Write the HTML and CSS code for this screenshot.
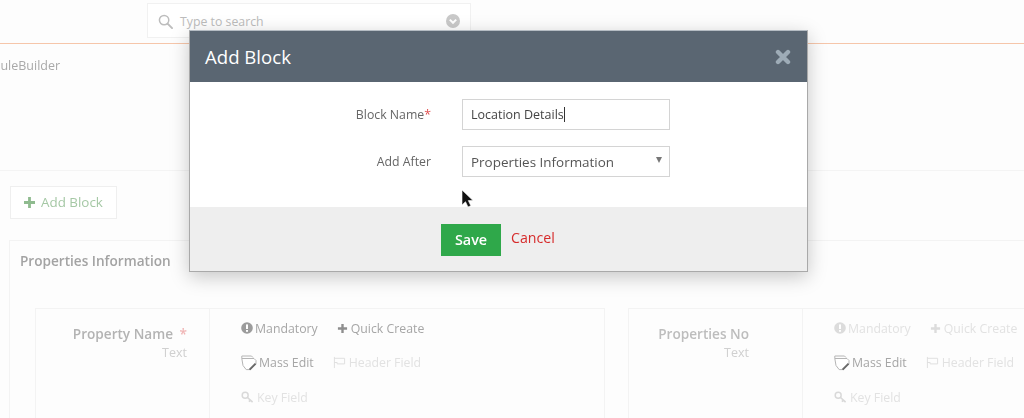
FILE: index.html
```html
<!DOCTYPE html>
<html lang="en">
<head>
<meta charset="utf-8">
<title>Add Block</title>
<link rel="stylesheet" href="styles.css">
</head>
<body>
<div class="page">
  <header class="topbar">
    <div class="search">
      <svg class="search-icon" viewBox="0 0 16 16" width="15" height="15"><circle cx="6.5" cy="6.5" r="5" fill="none" stroke="#bdbdbd" stroke-width="1.6"/><path d="M10.2 10.2 15 15" stroke="#bdbdbd" stroke-width="2" stroke-linecap="round"/></svg>
      <span class="search-text">Type to search</span>
      <svg class="search-caret" viewBox="0 0 14 14" width="14" height="14"><circle cx="7" cy="7" r="7" fill="#c9c9c9"/><path d="M3.8 5.6 7 8.8l3.2-3.2" fill="none" stroke="#fff" stroke-width="2"/></svg>
    </div>
  </header>
  <div class="crumb"><span class="crumb-text">ModuleBuilder</span></div>
  <div class="actions">
    <button class="add-block"><svg class="plus" viewBox="0 0 11 11" width="11" height="11"><path d="M5.5 0v11M0 5.5h11" stroke="#8fbb8f" stroke-width="2.8"/></svg>Add Block</button>
  </div>
  <section class="block">
    <h2 class="block-title">Properties Information</h2>
    <div class="fields">
      <article class="field">
        <div class="field-name">
          <div class="name strong">Property Name <span class="req">*</span></div>
          <div class="type">Text</div>
        </div>
        <div class="props">
          <div class="prop-row">
            <span class="prop on tight"><svg viewBox="0 0 12 12" width="12" height="12"><circle cx="6" cy="6" r="5.8" fill="#9c9c9c"/><rect x="5" y="2.4" width="2" height="4.6" fill="#fff"/><rect x="5" y="8" width="2" height="1.8" fill="#fff"/></svg>Mandatory</span>
            <span class="prop on"><svg viewBox="0 0 12 12" width="11" height="11"><path d="M6 1v10M1 6h10" stroke="#8e8e8e" stroke-width="2.6"/></svg>Quick Create</span>
          </div>
          <div class="prop-row">
            <span class="prop on tight"><svg viewBox="0 0 16 16" width="16" height="16"><path d="M.8 3.5V1h9.7l1.5 1.5" fill="none" stroke="#b5b5b5"/><path d="M.8 3.5h12.2L15 5.5v3.2L9.5 14.6H5.2L2 10.5z" fill="#fff" stroke="#b5b5b5"/><path d="M8.6 14.6l6-6" stroke="#6a6a6a" stroke-width="2"/></svg>Mass Edit</span>
            <span class="prop off"><svg viewBox="0 0 14 14" width="13" height="13"><path d="M1.5 1v12M1.5 2.5h11v6h-8V7h-3" fill="none" stroke="#dedede"/></svg>Header Field</span>
          </div>
          <div class="prop-row">
            <span class="prop off"><svg viewBox="0 0 14 14" width="13" height="13"><circle cx="4.5" cy="4.5" r="3.2" fill="none" stroke="#d9d9d9" stroke-width="1.6"/><path d="M7 7l5.5 5M10 10l-1.5 1.5" stroke="#d9d9d9" stroke-width="1.8"/></svg>Key Field</span>
          </div>
        </div>
      </article>
      <article class="field">
        <div class="field-name no-star">
          <div class="name">Properties No</div>
          <div class="type">Text</div>
        </div>
        <div class="props">
          <div class="prop-row">
            <span class="prop off tight"><svg viewBox="0 0 12 12" width="12" height="12"><circle cx="6" cy="6" r="5.8" fill="#dcdcdc"/><rect x="5" y="2.4" width="2" height="4.6" fill="#fff"/><rect x="5" y="8" width="2" height="1.8" fill="#fff"/></svg>Mandatory</span>
            <span class="prop off"><svg viewBox="0 0 12 12" width="11" height="11"><path d="M6 1v10M1 6h10" stroke="#dcdcdc" stroke-width="2.6"/></svg>Quick Create</span>
          </div>
          <div class="prop-row">
            <span class="prop on tight"><svg viewBox="0 0 16 16" width="16" height="16"><path d="M.8 3.5V1h9.7l1.5 1.5" fill="none" stroke="#b5b5b5"/><path d="M.8 3.5h12.2L15 5.5v3.2L9.5 14.6H5.2L2 10.5z" fill="#fff" stroke="#b5b5b5"/><path d="M8.6 14.6l6-6" stroke="#6a6a6a" stroke-width="2"/></svg>Mass Edit</span>
            <span class="prop off"><svg viewBox="0 0 14 14" width="13" height="13"><path d="M1.5 1v12M1.5 2.5h11v6h-8V7h-3" fill="none" stroke="#dedede"/></svg>Header Field</span>
          </div>
          <div class="prop-row">
            <span class="prop off"><svg viewBox="0 0 14 14" width="13" height="13"><circle cx="4.5" cy="4.5" r="3.2" fill="none" stroke="#d9d9d9" stroke-width="1.6"/><path d="M7 7l5.5 5M10 10l-1.5 1.5" stroke="#d9d9d9" stroke-width="1.8"/></svg>Key Field</span>
          </div>
        </div>
      </article>
    </div>
  </section>
</div>

<div class="modal">
  <div class="modal-head">
    <h1 class="modal-title">Add Block</h1>
    <svg class="modal-close" viewBox="0 0 16 16" width="16" height="16"><path d="M3 3l10 10M13 3 3 13" stroke="#9eacb7" stroke-width="4.4" stroke-linecap="round"/></svg>
  </div>
  <div class="modal-body">
    <div class="form-row">
      <label class="form-label">Block Name<span class="star">*</span></label>
      <div class="input"><span>Location Details</span><span class="caret"></span></div>
    </div>
    <div class="form-row">
      <label class="form-label">Add After</label>
      <div class="input select"><span>Properties Information</span><span class="arrow"></span></div>
    </div>
  </div>
  <div class="modal-foot">
    <button class="save">Save</button>
    <a class="cancel">Cancel</a>
  </div>
</div>

<svg class="cursor" viewBox="0 0 12 18" width="12" height="18"><path d="M1 0v15l3.5-3.3L7 17l2.8-1.3L7.3 10.6H12z" fill="#111" stroke="#fff" stroke-width=".6"/></svg>
</body>
</html>
```

FILE: styles.css
```css
* { box-sizing: border-box; }
html, body { margin: 0; height: 100%; overflow: hidden; }
body { background: #fdfdfd; font-family: "Open Sans", sans-serif; color: #a8a8a8; position: relative; }
.page { width: 1024px; height: 418px; overflow: hidden; filter: blur(.3px); }

.topbar { height: 44px; border-bottom: 1px solid #f6c6aa; padding: 3px 0 0 147px; }
.search { width: 324px; height: 35px; background: #fff; border: 1px solid #f1f1f1; display: flex; align-items: center; padding: 1px 10px 0; }
.search-icon { margin-right: 7px; }
.search-text { flex: 1; font-size: 12.3px; color: #bcbcbc; }

.crumb { height: 127px; border-bottom: 1px solid #f4f4f4; padding-top: 13px; }
.crumb-text { display: block; margin-left: -26px; font-size: 12.5px; line-height: 18px; color: #a9a9a9; }

.actions { padding: 15px 0 0 10px; height: 69px; }
.add-block { width: 107px; height: 33px; background: #fff; border: 1px solid #efefef; font: 13.4px "Open Sans", sans-serif; color: #a5c8a5; display: flex; align-items: center; padding: 0 0 2px 13px; }
.plus { margin: 1px 6px 0 0; flex: none; }

.block { margin-left: 9px; width: 1030px; height: 200px; border: 1px solid #f3f3f3; padding: 0 0 0 25px; }
.block-title { margin: 10px 0 0 -15px; font-size: 13.6px; line-height: 20px; font-weight: 600; color: #a3a3a3; }
.fields { display: flex; gap: 23px; margin-top: 37px; }
.field { width: 570px; height: 150px; border: 1px solid #f3f3f3; display: flex; flex: none; }
.field-name { width: 174px; border-right: 1px solid #f3f3f3; padding: 16px 22px 0 0; text-align: right; flex: none; }
.field-name.no-star { padding-right: 53px; }
.name { font-size: 13.6px; line-height: 18px; font-weight: 600; color: #bdbdbd; white-space: nowrap; }
.name.strong { color: #b3b3b3; }
.req { color: #f0b5b5; margin-left: 3px; }
.type { font-size: 12.5px; line-height: 18px; margin-top: 1px; color: #d0d0d0; }
.props { padding: 10px 0 0 31px; display: flex; flex-direction: column; gap: 16.5px; }
.prop-row { display: flex; height: 18px; align-items: center; gap: 19px; }
.prop { display: inline-flex; align-items: center; gap: 3px; font-size: 12.3px; white-space: nowrap; }
.prop.on { color: #a6a6a6; }
.prop.off { color: #e2e2e2; }
.prop.tight { gap: 2px; }

.modal { position: absolute; left: 189px; top: 30px; width: 619px; height: 242px; background: #fff; border: 1px solid #a9a9a9; border-top-color: #b5bcc3; box-shadow: 0 5px 18px rgba(0,0,0,.22); display: flex; flex-direction: column; filter: blur(.3px); }
.modal-head { height: 51px; background: #5a6672; display: flex; align-items: center; justify-content: space-between; padding: 0 16px 0 15px; flex: none; }
.modal-title { margin: 0; font-size: 18.6px; font-weight: 400; color: #fff; }
.modal-body { height: 125px; padding-top: 17px; display: flex; flex-direction: column; gap: 16px; flex: none; }
.form-row { display: flex; align-items: center; }
.form-label { width: 241px; text-align: right; font-size: 12.3px; color: #666; }
.star { color: #e05050; }
.input { margin-left: 31px; width: 208px; height: 31px; border: 1px solid #d4d4d4; display: flex; align-items: center; padding: 0 8px; font-size: 12.5px; color: #444; background: #fff; }
.caret { width: 1px; height: 15px; background: #333; }
.select { justify-content: space-between; font-size: 13.45px; color: #555; }
.arrow { width: 0; height: 0; border: 3.5px solid transparent; border-top: 6px solid #777; border-bottom: 0; margin: 0 -1px 3px 0; }
.modal-foot { flex: 1; background: #eee; display: flex; align-items: center; padding-left: 251px; gap: 10px; }
.save { width: 60px; height: 32px; margin-top: 1px; background: #2fa84a; border: 0; color: #fff; font: 600 14.4px "Open Sans", sans-serif; padding: 0; }
.cancel { font-size: 14.2px; color: #d62b2b; margin-top: -3px; }

.cursor { position: absolute; left: 461px; top: 190px; }
```
